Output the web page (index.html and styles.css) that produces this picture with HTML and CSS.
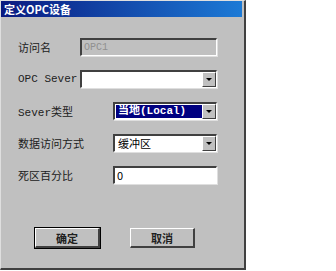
FILE: index.html
```html
<!doctype html>
<html lang="zh-CN">
    <head>
        <meta charset="UTF-8" />
        <title>定义OPC设备</title>
        <link rel="stylesheet" href="styles.css">
    </head>
    <body>
        <div class="dialog">
            <div class="title-bar">定义OPC设备</div>

            <div class="form">
                <div class="row">
                    <span class="label">访问名</span>
                    <div class="field wide disabled">OPC1</div>
                </div>
                <div class="row">
                    <span class="label">OPC Sever</span>
                    <div class="field wide combo">
                        <span class="value"></span>
                        <span class="drop"><i></i></span>
                    </div>
                </div>
                <div class="row">
                    <span class="label">Sever类型</span>
                    <div class="field combo">
                        <span class="value selected">当地(Local)</span>
                        <span class="drop"><i></i></span>
                    </div>
                </div>
                <div class="row">
                    <span class="label">数据访问方式</span>
                    <div class="field combo">
                        <span class="value">缓冲区</span>
                        <span class="drop"><i></i></span>
                    </div>
                </div>
                <div class="row">
                    <span class="label">死区百分比</span>
                    <div class="field">0</div>
                </div>
            </div>

            <div class="buttons">
                <button class="btn default">确定</button>
                <button class="btn">取消</button>
            </div>
        </div>
    </body>
</html>
```

FILE: styles.css
```css
body {
    margin: 0;
    background: #ffffff;
    font-family: "Liberation Mono", "Noto Sans CJK SC", monospace;
    font-size: 11px;
    color: #000000;
}

.dialog {
    width: 246px;
    height: 270px;
    box-sizing: border-box;
    background: #c0c0c0;
    border-top: 1px solid #dfdfdf;
    border-left: 1px solid #dfdfdf;
    border-right: 2px solid #404040;
    border-bottom: 2px solid #404040;
    display: flex;
    flex-direction: column;
}

.title-bar {
    height: 16px;
    margin: 0 2px 0 0;
    padding-left: 3px;
    background: linear-gradient(to right, #0a1a80, #1c7ad6);
    color: #ffffff;
    font-family: "Noto Sans CJK SC", sans-serif;
    font-weight: bold;
    font-size: 11px;
    line-height: 16px;
}

.form {
    display: flex;
    flex-direction: column;
    gap: 14px;
    padding: 21px 27px 0 17px;
}

.row {
    height: 18px;
    display: flex;
    align-items: center;
    justify-content: space-between;
}

.label {
    color: #202020;
}

.field {
    width: 104px;
    height: 18px;
    box-sizing: border-box;
    background: #ffffff;
    border-top: 2px solid #404040;
    border-left: 2px solid #404040;
    border-right: 1px solid #ffffff;
    border-bottom: 1px solid #ffffff;
    box-shadow: 1px 1px 0 #dfdfdf;
    padding-left: 2px;
    line-height: 15px;
    font-family: "Noto Sans CJK SC", sans-serif;
}

.field.wide {
    width: 137px;
}

.field.disabled {
    background: #c0c0c0;
    color: #909090;
    font-family: "Liberation Mono", monospace;
    font-size: 10px;
}

.combo {
    display: flex;
    padding: 0;
}

.value {
    flex: 1;
    padding-left: 2px;
    margin: 1px 0 1px 1px;
    line-height: 13px;
}

.value.selected {
    background: #000080;
    color: #ffffff;
    font-family: "Liberation Mono", "Noto Sans CJK SC", monospace;
    font-weight: bold;
    font-size: 11px;
}

.drop {
    width: 14px;
    box-sizing: border-box;
    background: #c0c0c0;
    border-top: 1px solid #ffffff;
    border-left: 1px solid #ffffff;
    border-right: 1px solid #404040;
    border-bottom: 1px solid #404040;
    display: flex;
    align-items: center;
    justify-content: center;
}

.drop i {
    width: 0;
    height: 0;
    border-left: 3px solid transparent;
    border-right: 3px solid transparent;
    border-top: 3px solid #000000;
}

.buttons {
    display: flex;
    gap: 30px;
    padding: 44px 0 0 34px;
}

.btn {
    width: 65px;
    height: 20px;
    box-sizing: border-box;
    background: #c0c0c0;
    border-top: 1px solid #ffffff;
    border-left: 1px solid #ffffff;
    border-right: 2px solid #404040;
    border-bottom: 2px solid #404040;
    font-family: "Noto Sans CJK SC", sans-serif;
    font-size: 11px;
    font-weight: bold;
    color: #202020;
    padding: 0;
}

.btn.default {
    outline: 1px solid #000000;
}
```
